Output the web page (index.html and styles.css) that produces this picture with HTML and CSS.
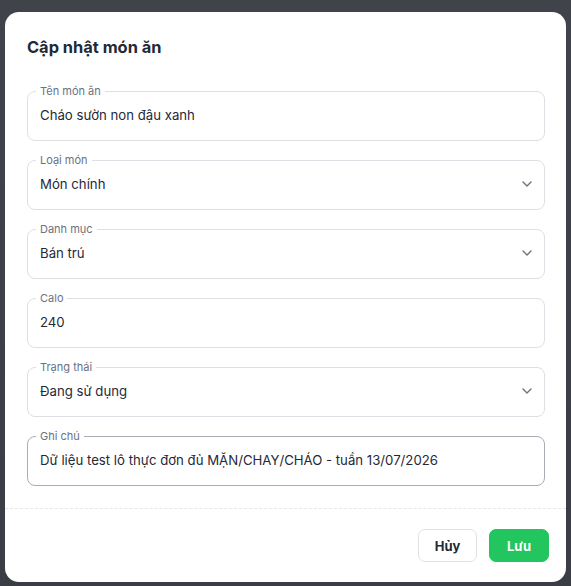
FILE: index.html
```html
<!DOCTYPE html>
<html lang="vi">
<head>
<meta charset="utf-8">
<title>Cập nhật món ăn</title>
<link rel="stylesheet" href="styles.css">
</head>
<body>
<div class="backdrop">
  <div class="modal">
    <div class="modal-body">
      <h2 class="title">Cập nhật món ăn</h2>
      <fieldset class="field">
        <legend>Tên món ăn</legend>
        <div class="value">Cháo sườn non đậu xanh</div>
      </fieldset>
      <fieldset class="field">
        <legend>Loại món</legend>
        <div class="value select"><span>Món chính</span><svg class="chev" width="10" height="6" viewBox="0 0 10 6"><path d="M1 1l4 4 4-4" fill="none" stroke="#6b7280" stroke-width="1.4" stroke-linecap="round" stroke-linejoin="round"/></svg></div>
      </fieldset>
      <fieldset class="field">
        <legend>Danh mục</legend>
        <div class="value select"><span>Bán trú</span><svg class="chev" width="10" height="6" viewBox="0 0 10 6"><path d="M1 1l4 4 4-4" fill="none" stroke="#6b7280" stroke-width="1.4" stroke-linecap="round" stroke-linejoin="round"/></svg></div>
      </fieldset>
      <fieldset class="field">
        <legend>Calo</legend>
        <div class="value">240</div>
      </fieldset>
      <fieldset class="field">
        <legend>Trạng thái</legend>
        <div class="value select"><span>Đang sử dụng</span><svg class="chev" width="10" height="6" viewBox="0 0 10 6"><path d="M1 1l4 4 4-4" fill="none" stroke="#6b7280" stroke-width="1.4" stroke-linecap="round" stroke-linejoin="round"/></svg></div>
      </fieldset>
      <fieldset class="field field-hover">
        <legend>Ghi chú</legend>
        <div class="value">Dữ liệu test lô thực đơn đủ MẶN/CHAY/CHÁO - tuần 13/07/2026</div>
      </fieldset>
    </div>
    <div class="modal-footer">
      <button class="btn btn-outline">Hủy</button>
      <button class="btn btn-primary">Lưu</button>
    </div>
  </div>
</div>
</body>
</html>
```

FILE: styles.css
```css
* { box-sizing: border-box; }
html, body {
  margin: 0;
  padding: 0;
  height: 100%;
}
body {
  font-family: Inter, "Noto Sans", sans-serif;
  background: #3f4249;
}
.backdrop {
  min-height: 100%;
  padding-top: 12px;
  background: linear-gradient(180deg, #40434a 0%, #3a3d44 100%);
}
.modal {
  width: 561px;
  margin: 0 auto;
  background: #ffffff;
  border-radius: 14px;
  overflow: hidden;
}
.modal-body {
  padding: 23px 21px 22px 22px;
  border-bottom: 1px dashed #e5e7eb;
}
.title {
  margin: 0 0 26px;
  font-size: 16.4px;
  line-height: 24px;
  font-weight: 700;
  color: #1f2937;
}
.field {
  margin: 0 0 13px;
  padding: 0 12px;
  min-width: 0;
  border: 1px solid #dcdfe4;
  border-radius: 8px;
}
.field:last-child { margin-bottom: 0; }
.field-hover { border-color: #a8adb5; }
.field legend {
  padding: 0 4px;
  margin-left: -4px;
  font-size: 11px;
  line-height: 12px;
  color: #6b7280;
}
.value {
  padding: 8px 0 15px;
  font-size: 13.2px;
  line-height: 20px;
  color: #1f2937;
  white-space: nowrap;
}
.select {
  display: flex;
  align-items: center;
  justify-content: space-between;
}
.chev { display: block; margin-right: 0; }
.modal-footer {
  display: flex;
  justify-content: flex-end;
  gap: 12px;
  padding: 20px 17px 20px 22px;
}
.btn {
  height: 33px;
  padding: 0;
  border-radius: 7px;
  font-family: inherit;
  font-size: 13px;
  font-weight: 700;
  cursor: pointer;
}
.btn-outline {
  width: 59px;
  background: #ffffff;
  border: 1px solid #dfe2e6;
  color: #1f2937;
}
.btn-primary {
  width: 60px;
  background: #22c55e;
  border: 1px solid #22c55e;
  color: #ffffff;
}
```
